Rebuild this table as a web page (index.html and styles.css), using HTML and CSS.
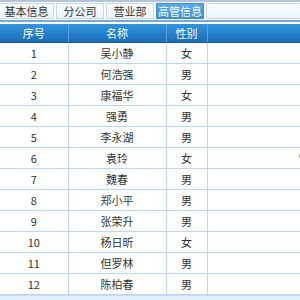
FILE: index.html
```html
<!DOCTYPE html>
<html lang="zh">
<head>
<meta charset="utf-8">
<title>高管信息</title>
<link rel="stylesheet" href="styles.css">
</head>
<body>
<div class="top-line"></div>
<div class="tabs">
  <div class="tab tab-first">基本信息</div>
  <div class="tab">分公司</div>
  <div class="tab">营业部</div>
  <div class="tab active">高管信息</div>
  <div class="tab tab-fill"></div>
</div>
<table class="grid">
  <colgroup>
    <col class="c-no"><col class="c-name"><col class="c-sex"><col class="c-extra">
  </colgroup>
  <thead>
    <tr><th>序号</th><th>名称</th><th>性别</th><th></th></tr>
  </thead>
  <tbody>
    <tr><td>1</td><td>吴小静</td><td>女</td><td></td></tr>
    <tr><td>2</td><td>何浩强</td><td>男</td><td></td></tr>
    <tr><td>3</td><td>康福华</td><td>女</td><td></td></tr>
    <tr><td>4</td><td>强勇</td><td>男</td><td></td></tr>
    <tr><td>5</td><td>李永湖</td><td>男</td><td></td></tr>
    <tr><td>6</td><td>袁玲</td><td>女</td><td>管理员</td></tr>
    <tr><td>7</td><td>魏春</td><td>男</td><td></td></tr>
    <tr><td>8</td><td>郑小平</td><td>男</td><td></td></tr>
    <tr><td>9</td><td>张荣升</td><td>男</td><td></td></tr>
    <tr><td>10</td><td>杨日昕</td><td>女</td><td></td></tr>
    <tr><td>11</td><td>但罗林</td><td>男</td><td></td></tr>
    <tr><td>12</td><td>陈柏春</td><td>男</td><td></td></tr>
  </tbody>
</table>
<div class="footer"></div>
</body>
</html>
```

FILE: styles.css
```css
html, body {
  margin: 0;
  padding: 0;
  background: #ffffff;
  overflow: hidden;
}
body {
  width: 423px;
  font-family: "Noto Sans CJK SC", "Noto Sans", sans-serif;
  font-size: 12px;
  color: #333333;
}
.top-line {
  height: 2px;
  background: #b5c3da;
}
.tabs {
  display: flex;
  gap: 2px;
  padding: 1px 0;
  border-bottom: 2px solid #72aadf;
}
.tab {
  box-sizing: border-box;
  width: 48px;
  height: 16px;
  line-height: 14px;
  text-align: center;
  border: 1px solid #c6d9ec;
  background: linear-gradient(#f6fbff, #eaf4fd);
  color: #333333;
  font-size: 11px;
}
.tab-first {
  width: 54px;
  border-left: none;
}
.tab.active {
  background: linear-gradient(#5aaae6, #3990d6);
  border-color: #3a8fd2;
  color: #ffffff;
}
.tab-fill {
  flex: 1;
}
.grid {
  margin-top: 2px;
  border-collapse: collapse;
  table-layout: fixed;
  width: 423px;
}
.c-no { width: 68px; }
.c-name { width: 98px; }
.c-sex { width: 41px; }
.c-extra { width: 216px; }
.grid th {
  height: 18px;
  padding: 0;
  background: linear-gradient(#2f96de, #1c6db8);
  color: #ffffff;
  font-weight: normal;
  font-size: 11px;
  border-right: 1px solid #5ea2dc;
  border-bottom: 1px solid #17599a;
}
.grid td {
  height: 20px;
  padding: 0;
  text-align: center;
  font-size: 11px;
  border-right: 1px solid #b9d5f0;
  border-bottom: 1px solid #bcd7f1;
  white-space: nowrap;
}
.footer {
  height: 6px;
  background: #e4f1fc;
  border-top: 1px solid #c5ddf3;
}
```
